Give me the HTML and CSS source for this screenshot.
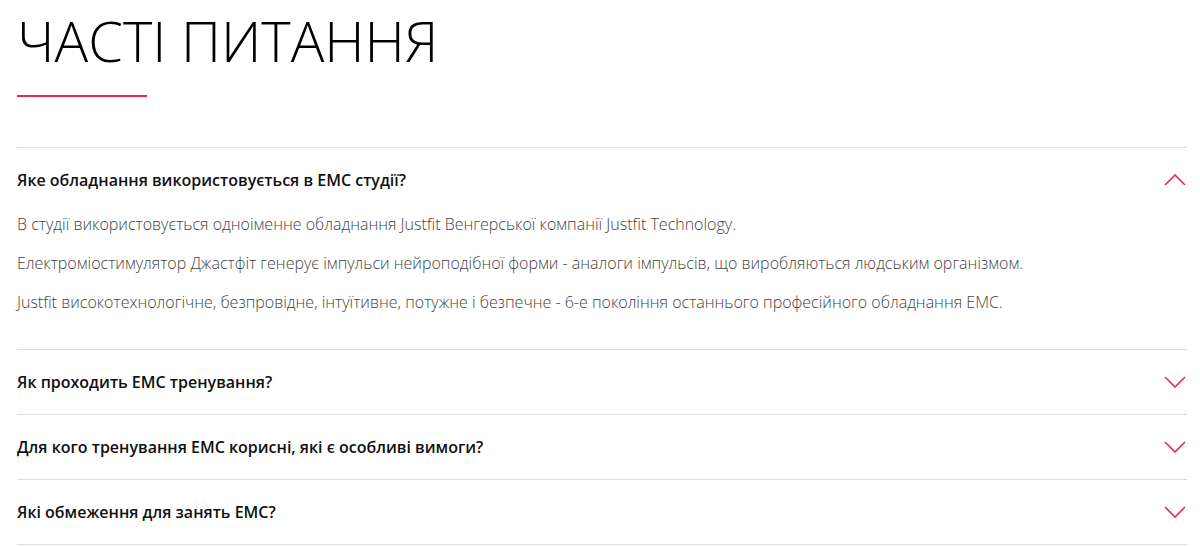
FILE: index.html
```html
<!DOCTYPE html>
<html lang="uk">
<head>
<meta charset="utf-8">
<link rel="stylesheet" href="styles.css">
</head>
<body>
<section class="faq">
  <h1 class="faq-title">ЧАСТІ ПИТАННЯ</h1>
  <div class="faq-rule"></div>
  <div class="faq-list">
    <div class="faq-item open">
      <div class="faq-q">
        <span>Яке обладнання використовується в ЕМС студії?</span>
        <svg class="chev" width="22" height="12" viewBox="0 0 22 12"><path d="M1 11 L11 1 L21 11" fill="none" stroke="#e8294a" stroke-width="1.6"/></svg>
      </div>
      <div class="faq-a">
        <p>В студії використовується одноіменне обладнання Justfit Венгерської компанії Justfit Technology.</p>
        <p>Електроміостимулятор Джастфіт генерує імпульси нейроподібної форми - аналоги імпульсів, що виробляються людським організмом.</p>
        <p>Justfit високотехнологічне, безпровідне, інтуїтивне, потужне і безпечне - 6-е покоління останнього професійного обладнання ЕМС.</p>
      </div>
    </div>
    <div class="faq-item">
      <div class="faq-q">
        <span>Як проходить ЕМС тренування?</span>
        <svg class="chev" width="22" height="12" viewBox="0 0 22 12"><path d="M1 1 L11 11 L21 1" fill="none" stroke="#e8294a" stroke-width="1.6"/></svg>
      </div>
    </div>
    <div class="faq-item">
      <div class="faq-q">
        <span>Для кого тренування ЕМС корисні, які є особливі вимоги?</span>
        <svg class="chev" width="22" height="12" viewBox="0 0 22 12"><path d="M1 1 L11 11 L21 1" fill="none" stroke="#e8294a" stroke-width="1.6"/></svg>
      </div>
    </div>
    <div class="faq-item">
      <div class="faq-q">
        <span>Які обмеження для занять ЕМС?</span>
        <svg class="chev" width="22" height="12" viewBox="0 0 22 12"><path d="M1 1 L11 11 L21 1" fill="none" stroke="#e8294a" stroke-width="1.6"/></svg>
      </div>
    </div>
  </div>
</section>
</body>
</html>
```
FILE: styles.css
```css
* { box-sizing: border-box; }
html, body { margin: 0; padding: 0; background: #fff; }
body { font-family: "Open Sans", "Noto Sans", sans-serif; color: #111; }
.faq { width: 1170px; margin-left: 17px; padding-top: 7px; }
.faq-title {
  margin: 0;
  font-size: 56px;
  line-height: 67px;
  font-weight: 300;
  color: #000;
  letter-spacing: 0;
}
.faq-rule { width: 130px; height: 2px; background: #e8294a; margin-top: 21px; }
.faq-list { margin-top: 50px; border-bottom: 1px solid #dddddd; }
.faq-item { border-top: 1px solid #dddddd; }
.faq-q {
  height: 64px;
  display: flex;
  align-items: center;
  justify-content: space-between;
  font-size: 16px;
  font-weight: 600;
  color: #111;
}
.chev { margin-right: 1px; }
.faq-a { padding-bottom: 20px; }
.faq-a p {
  margin: 0 0 15px;
  font-size: 16px;
  line-height: 24px;
  font-weight: 300;
  color: #444;
}
```
